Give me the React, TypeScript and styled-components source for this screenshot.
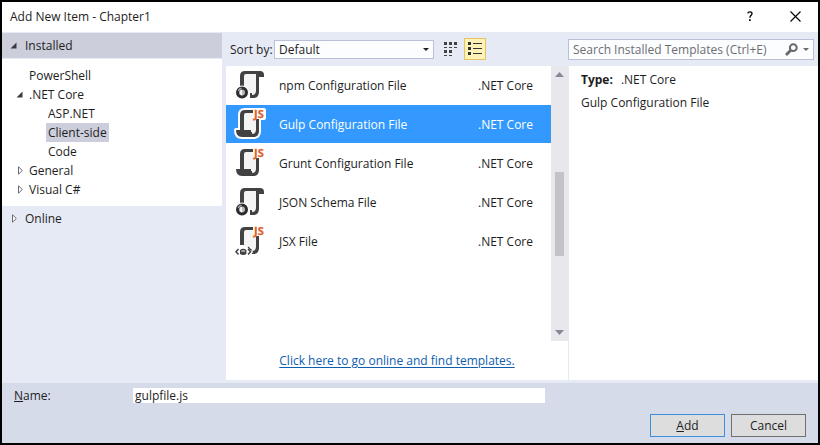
import React from "react";
import styled, { createGlobalStyle, css } from "styled-components";

const GlobalStyle = createGlobalStyle`
  *, *::before, *::after { box-sizing: border-box; }
  body {
    margin: 0;
    font-family: "Open Sans", "Noto Sans", sans-serif;
    font-size: 12px;
    line-height: 19px;
    color: #1e1e1e;
  }
  button, input, select { font: inherit; color: inherit; margin: 0; border-radius: 0; }
  ul { list-style: none; margin: 0; padding: 0; }
  svg { display: block; flex: none; }
`;

const Dialog = styled.main`
  display: flex;
  flex-direction: column;
  min-height: 100vh;
  border: 2px solid #000;
  background: #e6eaf5;
`;

const TitleBar = styled.header`
  display: flex;
  align-items: center;
  height: 30px;
  padding: 0 13px 2px 8px;
  background: #fff;
`;

const Title = styled.h1`
  flex: 1;
  margin: 0;
  font-size: 12px;
  font-weight: 400;
`;

const TitleButton = styled.button`
  display: grid;
  place-items: center;
  width: 20px;
  height: 20px;
  margin-left: 25px;
  padding: 0;
  border: 0;
  background: none;
`;

const Body = styled.div`
  flex: 1;
  display: grid;
  grid-template-columns: 220px minmax(0, 1fr) 250px;
  padding-bottom: 3px;
`;

const Sidebar = styled.nav`
  padding-top: 1px;
`;

const GroupButton = styled.button<{ $active?: boolean }>`
  display: flex;
  align-items: center;
  width: 100%;
  height: 25px;
  padding: 0 7px;
  border: 0;
  text-align: left;
  background: ${(p) => (p.$active ? "#cccedb" : "none")};
`;

const Tree = styled.ul`
  margin: 1px 0 0;
  padding: 7px 0 7px;
  background: #fff;
`;

const TreeItem = styled.li<{ $level: number }>`
  display: flex;
  align-items: center;
  height: 19px;
  padding-left: ${(p) => (p.$level === 1 ? 13 : 32)}px;
`;

const Twisty = styled.span<{ $wide?: boolean }>`
  width: ${(p) => (p.$wide ? 16 : 12)}px;
`;

const TreeLabel = styled.button<{ $selected?: boolean }>`
  height: 19px;
  padding: 0 2px;
  border: 0;
  background: ${(p) => (p.$selected ? "#cccedb" : "none")};
`;

const Center = styled.section`
  display: flex;
  flex-direction: column;
  padding-left: 4px;
`;

const Toolbar = styled.div`
  display: flex;
  align-items: center;
  height: 34px;
  padding: 0 4px;
`;

const SortLabel = styled.label`
  width: 44px;
  white-space: nowrap;
`;

const SelectWrap = styled.div`
  display: grid;
  grid-template-columns: minmax(0, 1fr) 10px;
  align-items: center;
  flex: 0 1 160px;
  height: 19px;
  border: 1px solid #b9c0d8;
  background: #fcfdff;
`;

const SortSelect = styled.select`
  grid-area: 1 / 1 / 2 / 3;
  appearance: none;
  width: 100%;
  height: 17px;
  padding: 0 16px 0 4px;
  border: 0;
  line-height: 17px;
  background: none;
  outline: none;
`;

const SelectArrow = styled.svg`
  grid-area: 1 / 2;
  pointer-events: none;
`;

const ViewButton = styled.button<{ $active?: boolean }>`
  display: grid;
  place-items: center;
  width: 22px;
  height: 22px;
  margin-left: 6px;
  padding: 0;
  border: 1px solid ${(p) => (p.$active ? "#e5c365" : "transparent")};
  background: ${(p) => (p.$active ? "#fff2b8" : "none")};
  & + & { margin-left: 2px; }
`;

const ListPanel = styled.div`
  flex: 1;
  display: flex;
  flex-direction: column;
  background: #fff;
`;

const ScrollArea = styled.div`
  display: flex;
  height: 275px;
`;

const Templates = styled.ul`
  flex: 1;
  display: flex;
  flex-direction: column;
  gap: 1px;
`;

const TemplateRow = styled.li<{ $selected?: boolean }>`
  display: grid;
  grid-template-columns: 34px minmax(0, 1fr) 73px;
  align-items: center;
  height: 38px;
  padding-left: 8px;
  ${(p) => p.$selected && css`
    background: #3399ff;
    color: #fff;
  `}
`;

const TemplateName = styled.span`
  padding-left: 11px;
`;

const ScrollBar = styled.div`
  display: flex;
  flex-direction: column;
  align-items: center;
  width: 17px;
  padding: 6px 0;
  background: #e8e8ec;
`;

const ScrollTrack = styled.div`
  flex: 1;
  width: 9px;
  padding: 95px 0 0;
`;

const ScrollThumb = styled.div`
  height: 84px;
  background: #c2c3c9;
`;

const OnlineRow = styled.div`
  display: flex;
  flex: 1;
  align-items: center;
  justify-content: center;
`;

const OnlineLink = styled.a`
  color: #0e5eb0;
  text-decoration: underline;
  text-underline-offset: 2px;
`;

const Side = styled.aside`
  display: flex;
  flex-direction: column;
`;

const SearchArea = styled.div`
  display: flex;
  align-items: center;
  height: 34px;
  padding-right: 4px;
`;

const SearchBox = styled.div`
  flex: 1;
  display: flex;
  align-items: center;
  gap: 5px;
  height: 21px;
  padding-right: 4px;
  border: 1px solid #b9c0d8;
  background: #fcfdff;
`;

const SearchInput = styled.input`
  flex: 1;
  min-width: 0;
  height: 19px;
  padding: 0 4px;
  border: 0;
  outline: none;
  background: none;
  &::placeholder { color: #6d6d72; opacity: 1; }
`;

const Details = styled.div`
  flex: 1;
  margin-left: 1px;
  padding: 4px 12px;
  background: #fff;
`;

const DetailLine = styled.p`
  margin: 0 0 4px;
`;

const TypeLabel = styled.strong`
  margin-right: 8px;
`;

const Footer = styled.footer`
  display: flex;
  flex-direction: column;
  justify-content: space-between;
  height: 60px;
  padding: 5px 12px 6px;
  background: #d6dbe9;
`;

const NameRow = styled.div`
  display: grid;
  grid-template-columns: 119px minmax(0, 1fr) 261px;
  align-items: center;
  height: 15px;
  line-height: 15px;
`;

const NameInput = styled.input`
  height: 15px;
  padding: 0 2px;
  border: 0;
  line-height: 15px;
  outline: none;
  background: #fff;
`;

const Actions = styled.div`
  display: flex;
  justify-content: flex-end;
  gap: 6px;
`;

const ActionButton = styled.button<{ $primary?: boolean }>`
  width: 75px;
  height: 23px;
  padding: 0;
  border: 1px solid ${(p) => (p.$primary ? "#3c8ede" : "#707070")};
  line-height: 20px;
  background: #dddddd;
`;

function OpenMark() {
  return (
    <svg width="9" height="7" viewBox="-1 0 9 7" aria-hidden="true">
      <path d="M6.5 .5V6.5H.5z" fill="#3b3b40" />
    </svg>
  );
}

function ClosedMark() {
  return (
    <svg width="9" height="9" viewBox="0 0 9 9" aria-hidden="true">
      <path d="M3.5 .8V8.2L7.3 4.5z" fill="#fff" stroke="#6a6a70" />
    </svg>
  );
}

function Arrow({ w, h, up, color }: { w: number; h: number; up?: boolean; color: string }) {
  return (
    <svg width={w} height={h} viewBox="0 0 10 5" preserveAspectRatio="none" aria-hidden="true">
      <path d={up ? "M0 5H10L5 0z" : "M0 0H10L5 5z"} fill={color} />
    </svg>
  );
}

type IconKind = "json" | "js" | "jsx";

function ScrollShape({ kind }: { kind: IconKind }) {
  if (kind === "json") {
    return (
      <>
        <path d="M4 17V5Q4 0 9 0H24Q28 0 28 4V6H23V21Q23 27 17 27H14V22H16V24Q20 24 20 20V3H10Q8 3 8 5V17z" />
      </>
    );
  }
  return (
    <>
      <path d={kind === "js" ? "M4 20V5Q4 0 9 0H17V3H10Q8 3 8 5V20z" : "M4 18V5Q4 0 9 0H17V3H10Q8 3 8 5V18z"} />
      <path d="M20 9H23V21Q23 27 17 27H14V22H16V24Q20 24 20 20z" />
      {kind === "js" && <path d="M0 20H15V22Q15 24 17 24L20 25Q19 27 16 27H6Q0 27 0 20z" />}
    </>
  );
}

function FileIcon({ kind, outlined }: { kind: IconKind; outlined?: boolean }) {
  return (
    <svg width="34" height="34" viewBox="-2 -3 34 34" aria-hidden="true">
      {outlined && (
        <g fill="#fff" stroke="#fff" strokeWidth="4" strokeLinejoin="round">
          <ScrollShape kind={kind} />
          <path d="M18 0H28V8H20z" />
        </g>
      )}
      <path d="M8 3H20V24H16V21H8z" fill="#f4f4f5" />
      <g fill="#424242">
        <ScrollShape kind={kind} />
      </g>
      {kind !== "json" && (
        <>
          <path d="M17 0H28V9H18z" fill="#fff" />
          <text x="18" y="8" fontFamily="Open Sans, sans-serif" fontSize="11" fontWeight="700" fill="#e0622a" stroke="#e0622a" strokeWidth=".3">JS</text>
        </>
      )}
      {kind === "json" && (
        <>
          <circle cx="6" cy="21.5" r="7" fill="#fff" />
          <circle cx="6" cy="21.5" r="4.5" fill="#b8b8b8" stroke="#2c2c2c" strokeWidth="3" />
          <path d="M2.2 20A4.4 4.4 0 0 1 5.5 17.2" fill="none" stroke="#a5a5a5" strokeWidth="1.4" />
          <path d="M5.4 19.2Q4.2 21.5 5.8 24" fill="none" stroke="#fff" strokeWidth="1.6" />
        </>
      )}
      {kind === "jsx" && (
        <>
          <path d="M-1 20H14L17 25L14 29H-1z" fill="#fff" />
          <g fill="none" stroke="#424242" strokeWidth="1.5">
            <path d="M2.5 22L0 24.8L2.5 27.5M12 22L14.5 24.8L12 27.5" />
          </g>
          <path d="M4 23Q7.2 20.5 10.4 23V27Q7.2 29 4 27z" fill="#424242" />
          <path d="M5.4 24H9" stroke="#fff" />
          <path d="M12 20L15.5 23.5" stroke="#424242" strokeWidth="1.3" />
        </>
      )}
    </svg>
  );
}

function SmallIconsGlyph() {
  return (
    <svg width="14" height="14" viewBox="0 0 14 14" aria-hidden="true">
      <path d="M0 0h3v3H0zM5 0h3v3H5zM10 0h3v3h-3zM0 8h3v3H0zM5 8h3v3H5zM0 5h3v1H0zM5 5h3v1H5zM10 5h3v1h-3zM0 13h3v1H0zM5 13h3v1H5z" fill="#424242" />
    </svg>
  );
}

function ListGlyph() {
  return (
    <svg width="14" height="14" viewBox="0 0 14 14" aria-hidden="true">
      <path d="M0 0h3v3H0zM0 5h3v3H0zM0 10h3v3H0zM5 1h9v1H5zM5 6h9v1H5zM5 11h9v1H5z" fill="#333" />
    </svg>
  );
}

const tree = [
  { label: "PowerShell", level: 1 },
  { label: ".NET Core", level: 1, state: "open" },
  { label: "ASP.NET", level: 2 },
  { label: "Client-side", level: 2, selected: true },
  { label: "Code", level: 2 },
  { label: "General", level: 1, state: "closed" },
  { label: "Visual C#", level: 1, state: "closed" },
];

const templates: { name: string; kind: IconKind; selected?: boolean }[] = [
  { name: "npm Configuration File", kind: "json" },
  { name: "Gulp Configuration File", kind: "js", selected: true },
  { name: "Grunt Configuration File", kind: "js" },
  { name: "JSON Schema File", kind: "json" },
  { name: "JSX File", kind: "jsx" },
];

export default function App() {
  return (
    <>
      <GlobalStyle />
      <Dialog>
        <TitleBar>
          <Title>Add New Item - Chapter1</Title>
          <TitleButton aria-label="Help">
            <svg width="6" height="10" viewBox="0 0 6 10" aria-hidden="true">
              <path d="M.8 2.4Q.9 .8 2.9 .8Q5 .8 5 2.6Q5 3.6 4 4.4Q2.9 5.2 2.9 6.8" fill="none" stroke="#000" strokeWidth="1.3" />
              <path d="M2 8.2h1.7V10H2z" />
            </svg>
          </TitleButton>
          <TitleButton aria-label="Close">
            <svg width="11" height="11" viewBox="0 0 11 11" aria-hidden="true">
              <path d="M.5 .5L10.5 10.5M10.5 .5L.5 10.5" stroke="#000" strokeWidth="1.1" />
            </svg>
          </TitleButton>
        </TitleBar>
        <Body>
          <Sidebar>
            <GroupButton $active aria-expanded="true"><Twisty $wide><OpenMark /></Twisty>Installed</GroupButton>
            <Tree>
              {tree.map((t) => (
                <TreeItem key={t.label} $level={t.level}>
                  {t.level === 1 ? (
                    <Twisty>
                      {t.state === "open" && <OpenMark />}
                      {t.state === "closed" && <ClosedMark />}
                    </Twisty>
                  ) : (
                    <Twisty />
                  )}
                  <TreeLabel $selected={t.selected}>{t.label}</TreeLabel>
                </TreeItem>
              ))}
            </Tree>
            <GroupButton aria-expanded="false"><Twisty $wide><ClosedMark /></Twisty>Online</GroupButton>
          </Sidebar>
          <Center>
            <Toolbar>
              <SortLabel htmlFor="sort">Sort by:</SortLabel>
              <SelectWrap>
                <SortSelect id="sort" defaultValue="Default">
                  <option>Default</option>
                </SortSelect>
                <SelectArrow width="6" height="3" viewBox="0 0 6 3" aria-hidden="true">
                  <path d="M0 0H6L3 3z" fill="#1e1e1e" />
                </SelectArrow>
              </SelectWrap>
              <ViewButton aria-label="Small icons"><SmallIconsGlyph /></ViewButton>
              <ViewButton $active aria-label="List"><ListGlyph /></ViewButton>
            </Toolbar>
            <ListPanel>
              <ScrollArea>
                <Templates>
                  {templates.map((t) => (
                    <TemplateRow key={t.name} $selected={t.selected}>
                      <FileIcon kind={t.kind} outlined={t.selected} />
                      <TemplateName>{t.name}</TemplateName>
                      <span>.NET Core</span>
                    </TemplateRow>
                  ))}
                </Templates>
                <ScrollBar>
                  <Arrow w={9} h={5} up color="#868999" />
                  <ScrollTrack><ScrollThumb /></ScrollTrack>
                  <Arrow w={9} h={5} color="#868999" />
                </ScrollBar>
              </ScrollArea>
              <OnlineRow>
                <OnlineLink href="#online">Click here to go online and find templates.</OnlineLink>
              </OnlineRow>
            </ListPanel>
          </Center>
          <Side>
            <SearchArea>
              <SearchBox>
                <SearchInput aria-label="Search Installed Templates" placeholder="Search Installed Templates (Ctrl+E)" />
                <svg width="13" height="13" viewBox="0 0 13 13" aria-hidden="true">
                  <circle cx="8.3" cy="4.7" r="3.4" fill="none" stroke="#68686e" strokeWidth="2" />
                  <path d="M6 7L1 12" stroke="#68686e" strokeWidth="2.8" />
                </svg>
                <Arrow w={6} h={3} color="#68686e" />
              </SearchBox>
            </SearchArea>
            <Details>
              <DetailLine><TypeLabel>Type:</TypeLabel>.NET Core</DetailLine>
              <DetailLine>Gulp Configuration File</DetailLine>
            </Details>
          </Side>
        </Body>
        <Footer>
          <NameRow>
            <label htmlFor="name"><u>N</u>ame:</label>
            <NameInput id="name" defaultValue="gulpfile.js" />
          </NameRow>
          <Actions>
            <ActionButton $primary><u>A</u>dd</ActionButton>
            <ActionButton>Cancel</ActionButton>
          </Actions>
        </Footer>
      </Dialog>
    </>
  );
}
